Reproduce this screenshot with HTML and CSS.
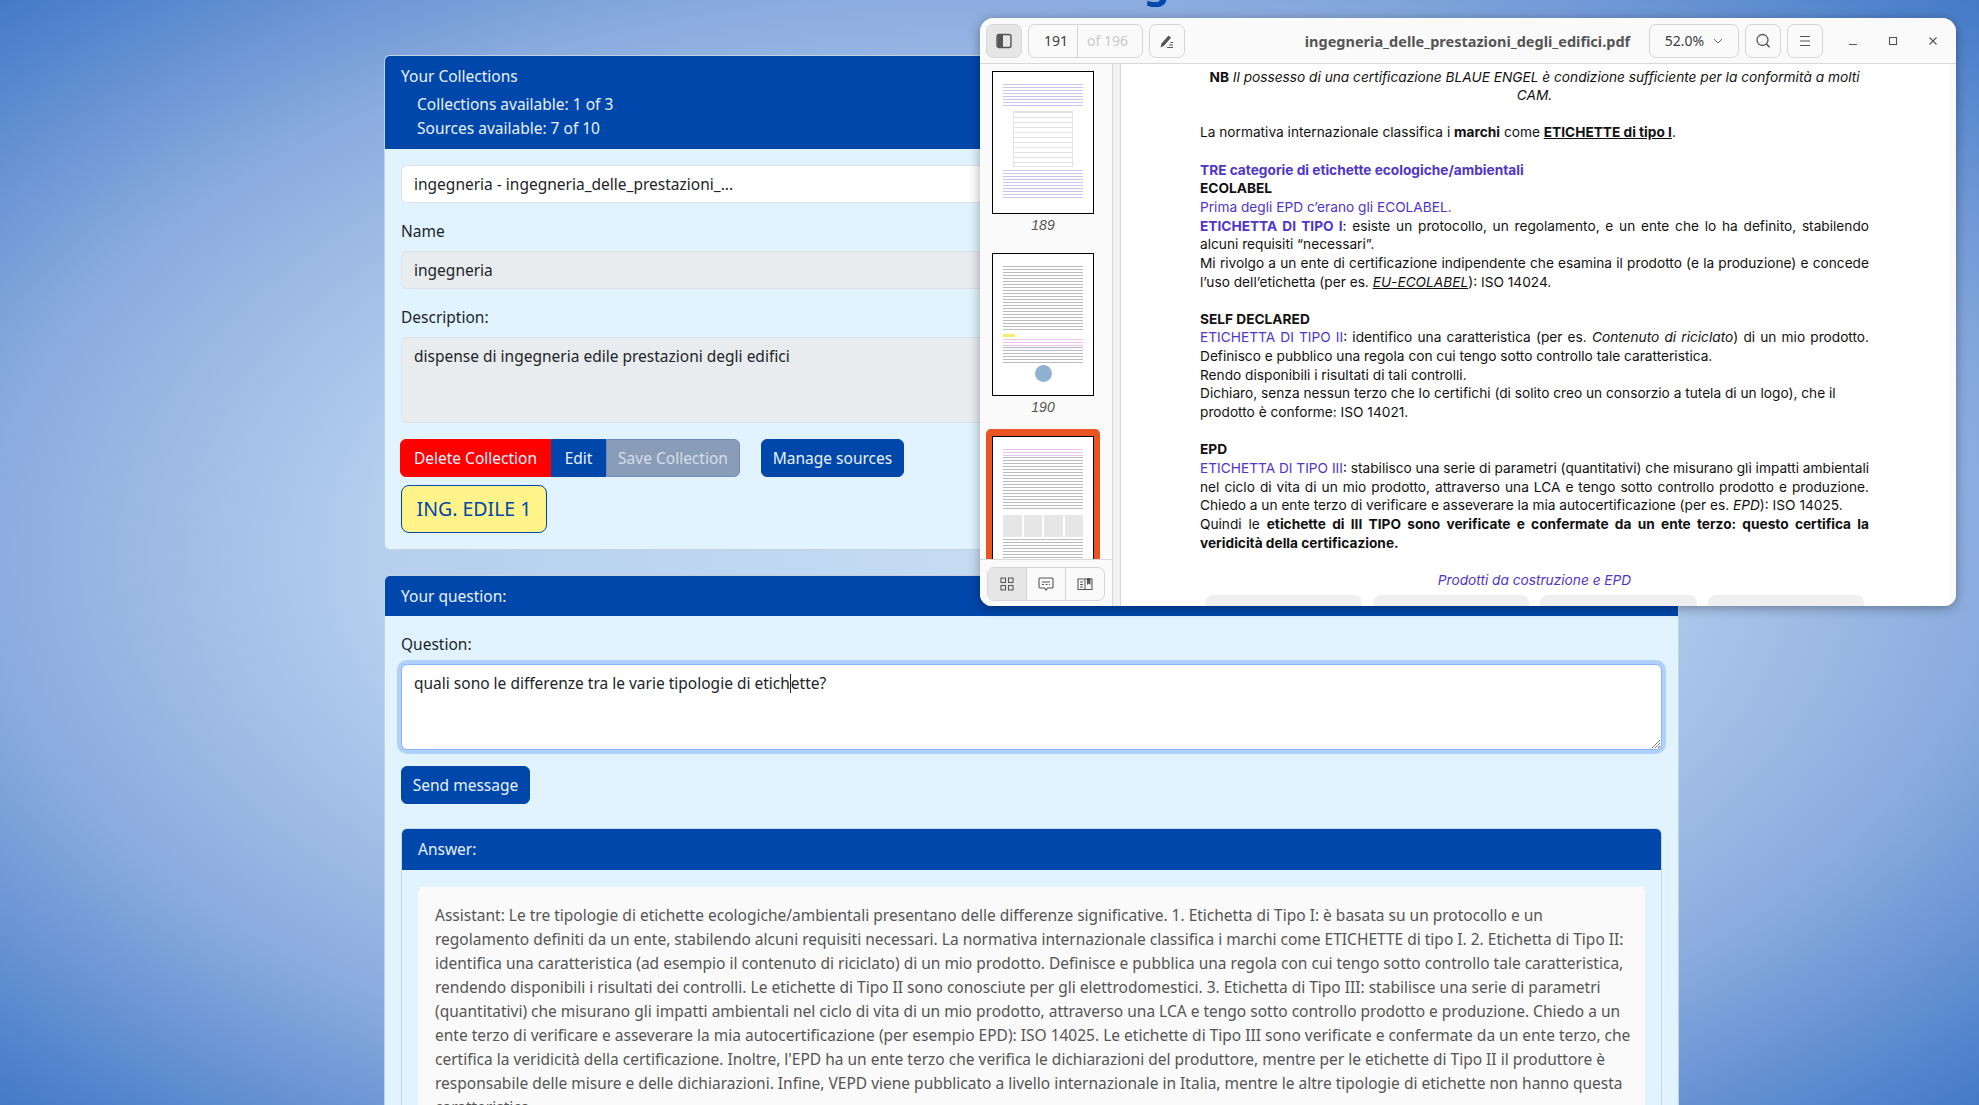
FILE: index.html
```html
<!DOCTYPE html>
<html lang="en">

<head>
    <meta charset="UTF-8">
    <title>Collections</title>
    <link rel="stylesheet" href="styles.css">
</head>

<body>
    <main class="page">
        <h1 class="page-title">Your Knowledge</h1>

        <section class="card">
            <div class="card-header collections-header">
                <div class="collections-title">Your Collections</div>
                <div class="quota">Collections available: 1 of 3</div>
                <div class="quota">Sources available: 7 of 10</div>
            </div>
            <div class="card-body">
                <div class="field select-field">ingegneria - ingegneria_delle_prestazioni_...</div>
                <div class="label">Name</div>
                <div class="field readonly">ingegneria</div>
                <div class="label">Description:</div>
                <div class="field readonly area">dispense di ingegneria edile prestazioni degli edifici</div>
                <div class="actions">
                    <div class="btn-group">
                        <button class="btn btn-danger">Delete Collection</button>
                        <button class="btn btn-square">Edit</button>
                        <button class="btn btn-disabled">Save Collection</button>
                    </div>
                    <button class="btn btn-manage">Manage sources</button>
                </div>
                <button class="btn-tag">ING. EDILE 1</button>
            </div>
        </section>

        <section class="card question-card">
            <div class="card-header">Your question:</div>
            <div class="card-body">
                <div class="label question-label">Question:</div>
                <div class="question-box">
                    <span>quali sono le differenze tra le varie tipologie di etich<i class="caret"></i>ette?</span>
                    <svg class="grip" width="10" height="10" viewBox="0 0 10 10">
                        <path d="M9 1L1 9M9 4L4 9M9 7L7 9" stroke="#777" stroke-width="1" fill="none"/>
                    </svg>
                </div>
                <button class="btn send-btn">Send message</button>

                <div class="answer">
                    <div class="card-header">Answer:</div>
                    <div class="answer-body">
                        <p class="answer-text">Assistant: Le tre tipologie di etichette ecologiche/ambientali presentano delle differenze significative. 1. Etichetta di Tipo I: è basata su un protocollo e un<br>
                        regolamento definiti da un ente, stabilendo alcuni requisiti necessari. La normativa internazionale classifica i marchi come ETICHETTE di tipo I. 2. Etichetta di Tipo II:<br>
                        identifica una caratteristica (ad esempio il contenuto di riciclato) di un mio prodotto. Definisce e pubblica una regola con cui tengo sotto controllo tale caratteristica,<br>
                        rendendo disponibili i risultati dei controlli. Le etichette di Tipo II sono conosciute per gli elettrodomestici. 3. Etichetta di Tipo III: stabilisce una serie di parametri<br>
                        (quantitativi) che misurano gli impatti ambientali nel ciclo di vita di un mio prodotto, attraverso una LCA e tengo sotto controllo prodotto e produzione. Chiedo a un<br>
                        ente terzo di verificare e asseverare la mia autocertificazione (per esempio EPD): ISO 14025. Le etichette di Tipo III sono verificate e confermate da un ente terzo, che<br>
                        certifica la veridicità della certificazione. Inoltre, l'EPD ha un ente terzo che verifica le dichiarazioni del produttore, mentre per le etichette di Tipo II il produttore è<br>
                        responsabile delle misure e delle dichiarazioni. Infine, VEPD viene pubblicato a livello internazionale in Italia, mentre le altre tipologie di etichette non hanno questa<br>
                        caratteristica.</p>
                    </div>
                </div>
            </div>
        </section>
    </main>

    <!-- pdf viewer window, floats over the browser page -->
    <div class="viewer">
        <header class="viewer-bar">
            <button class="tool active">
                <svg width="16" height="16" viewBox="0 0 16 16"><rect x="1" y="1.500" width="14" height="13" rx="2" fill="none" stroke="#555" stroke-width="1.400"/><path d="M1.500 3.500a1.500 1.500 0 0 1 1.500-1.500h4v12H3a1.500 1.500 0 0 1-1.500-1.500z" fill="#555"/></svg>
            </button>
            <div class="page-box">
                <span class="page-now">191</span>
                <span class="page-of">of 196</span>
            </div>
            <button class="tool">
                <svg width="16" height="16" viewBox="0 0 16 16"><path d="M1.500 14.500l1-4 7-8 2.500 2.200-7 8z" fill="#555"/><path d="M8 14.500h6M10 12h4M11.500 9.500h2.500" stroke="#555" stroke-width="1" fill="none"/></svg>
            </button>
            <div class="doc-name">ingegneria_delle_prestazioni_degli_edifici.pdf</div>
            <div class="zoom-box">
                <span>52.0%</span>
                <svg width="10" height="6" viewBox="0 0 10 6"><path d="M1 1l4 4 4-4" fill="none" stroke="#666" stroke-width="1"/></svg>
            </div>
            <button class="tool">
                <svg width="16" height="16" viewBox="0 0 16 16"><circle cx="7.500" cy="7" r="5.500" fill="none" stroke="#555" stroke-width="1.300"/><path d="M11.500 11l3 3.200" stroke="#555" stroke-width="1.500"/></svg>
            </button>
            <button class="tool">
                <svg width="14" height="12" viewBox="0 0 14 12"><path d="M2 1.500h10M2 6h10M2 10.500h10" stroke="#555" stroke-width="1.100"/></svg>
            </button>
            <div class="win-controls">
                <svg width="10" height="10" viewBox="0 0 10 10"><path d="M1 8.500h8" stroke="#555" stroke-width="1.200"/></svg>
                <svg width="10" height="10" viewBox="0 0 10 10"><rect x="1.500" y="1.500" width="7" height="7" fill="none" stroke="#555" stroke-width="1.100"/></svg>
                <svg width="10" height="10" viewBox="0 0 10 10"><path d="M1.500 1.500l7 7M8.500 1.500l-7 7" stroke="#555" stroke-width="1.100"/></svg>
            </div>
        </header>

        <div class="viewer-main">
            <aside class="sidebar">
                <div class="thumbs">
                    <div class="thumb-wrap">
                        <div class="thumb">
                            <div class="t-lines purple h24"></div>
                            <div class="t-table"></div>
                            <div class="t-lines purple h28"></div>
                        </div>
                        <div class="thumb-num">189</div>
                    </div>
                    <div class="thumb-wrap">
                        <div class="thumb">
                            <div class="t-lines dark h66"></div>
                            <div class="t-mark"></div>
                            <div class="t-lines pink h8"></div>
                            <div class="t-lines dark h16"></div>
                            <div class="t-logo"></div>
                        </div>
                        <div class="thumb-num">190</div>
                    </div>
                    <div class="thumb-wrap selected">
                        <div class="thumb">
                            <div class="t-lines pink h8"></div>
                            <div class="t-lines dark h52"></div>
                            <div class="t-cells"><i></i><i></i><i></i><i></i></div>
                            <div class="t-lines dark h24"></div>
                        </div>
                    </div>
                </div>
                <div class="side-foot">
                    <div class="side-tabs">
                        <div class="side-tab active">
                            <svg width="14" height="14" viewBox="0 0 14 14"><path d="M1 1h4.500v4.500H1zM8.500 1H13v4.500H8.500zM1 8.500h4.500V13H1zM8.500 8.500H13V13H8.500z" fill="none" stroke="#555" stroke-width="1.100"/></svg>
                        </div>
                        <div class="side-tab">
                            <svg width="16" height="15" viewBox="0 0 16 15"><path d="M2 1h12a1 1 0 0 1 1 1v8a1 1 0 0 1-1 1H9.500L8 13 6.500 11H2a1 1 0 0 1-1-1V2a1 1 0 0 1 1-1z" fill="none" stroke="#555" stroke-width="1.100"/><path d="M4 5h8M4 7.500h2M7.500 7.500h2M11 7.500h1" stroke="#555"/></svg>
                        </div>
                        <div class="side-tab">
                            <svg width="16" height="15" viewBox="0 0 16 15"><path d="M1 2h14v10.500H1z" fill="none" stroke="#555" stroke-width="1.100"/><path d="M8 2v10.500M3 5h3M3 7.500h3M3 10h3" stroke="#555"/><path d="M10 1h3.500v7l-1.750-1.500L10 8z" fill="#555"/></svg>
                        </div>
                    </div>
                </div>
            </aside>

            <div class="gutter"></div>

            <article class="pdf">
                <div class="pdf-line center"><b>NB</b> <em>Il possesso di una certificazione BLAUE ENGEL è condizione sufficiente per la conformità a molti</em></div>
                <div class="pdf-line center"><em>CAM.</em></div>
                <div class="pdf-line"></div>
                <div class="pdf-line">La normativa internazionale classifica i <b>marchi</b> come <b><u>ETICHETTE di tipo I</u></b>.</div>
                <div class="pdf-line"></div>
                <div class="pdf-line violet"><b>TRE categorie di etichette ecologiche/ambientali</b></div>
                <div class="pdf-line"><b>ECOLABEL</b></div>
                <div class="pdf-line violet">Prima degli EPD c’erano gli ECOLABEL.</div>
                <div class="pdf-line justify"><b class="violet">ETICHETTA DI TIPO I</b>: esiste un protocollo, un regolamento, e un ente che lo ha definito, stabilendo</div>
                <div class="pdf-line">alcuni requisiti “necessari”.</div>
                <div class="pdf-line justify">Mi rivolgo a un ente di certificazione indipendente che esamina il prodotto (e la produzione) e concede</div>
                <div class="pdf-line">l’uso dell’etichetta (per es. <em><u>EU-ECOLABEL</u></em>): ISO 14024.</div>
                <div class="pdf-line"></div>
                <div class="pdf-line"><b>SELF DECLARED</b></div>
                <div class="pdf-line justify"><span class="violet">ETICHETTA DI TIPO II</span>: identifico una caratteristica (per es. <em>Contenuto di riciclato</em>) di un mio prodotto.</div>
                <div class="pdf-line">Definisco e pubblico una regola con cui tengo sotto controllo tale caratteristica.</div>
                <div class="pdf-line">Rendo disponibili i risultati di tali controlli.</div>
                <div class="pdf-line">Dichiaro, senza nessun terzo che lo certifichi (di solito creo un consorzio a tutela di un logo), che il</div>
                <div class="pdf-line">prodotto è conforme: ISO 14021.</div>
                <div class="pdf-line"></div>
                <div class="pdf-line"><b>EPD</b></div>
                <div class="pdf-line justify"><span class="violet">ETICHETTA DI TIPO III</span>: stabilisco una serie di parametri (quantitativi) che misurano gli impatti ambientali</div>
                <div class="pdf-line justify">nel ciclo di vita di un mio prodotto, attraverso una LCA e tengo sotto controllo prodotto e produzione.</div>
                <div class="pdf-line">Chiedo a un ente terzo di verificare e asseverare la mia autocertificazione (per es. <em>EPD</em>): ISO 14025.</div>
                <div class="pdf-line justify">Quindi le <b>etichette di III TIPO sono verificate e confermate da un ente terzo: questo certifica la</b></div>
                <div class="pdf-line"><b>veridicità della certificazione.</b></div>
                <div class="pdf-line"></div>
                <div class="pdf-line center violet"><em>Prodotti da costruzione e EPD</em></div>
                <div class="pdf-cells"><i></i><i></i><i></i><i></i></div>
            </article>
        </div>
    </div>
</body>
</html>
```

FILE: styles.css
```css
* {
    box-sizing: border-box;
}

html, body {
    height: 100%;
}

body {
    margin: 0;
    overflow: hidden;
    font-family: "Noto Sans", sans-serif;
    font-size: 15.500px;
    line-height: 24px;
    color: #212529;
    background: radial-gradient(ellipse farthest-corner at 50% 50%, #c6dcf3 0%, #b5cfee 43%, #8aabde 72%, #437ac8 100%);
}

.page {
    width: 1295px;
    margin-left: 384px;
}

.page-title {
    margin: -50px 0 0;
    height: 105px;
    padding-top: 9px;
    text-align: center;
    font-size: 40px;
    line-height: 48px;
    color: #0047ab;
}

.card {
    background: #e0f3ff;
    border: 1px solid rgba(0, 0, 0, .125);
    border-radius: 6px;
}

.question-card {
    margin-top: 25px;
    border-bottom: 0;
}

.card-header {
    background: #0047ab;
    color: #e8f1ff;
    padding: 8px 16px;
    border-radius: 5px 5px 0 0;
    height: 40px;
}

.collections-header {
    height: 93px;
}

.collections-title {
    margin-bottom: 4px;
}

.quota {
    padding-left: 16px;
}

.card-body {
    padding: 16px;
}

.field {
    height: 38px;
    padding: 6px 12px;
    background: #fff;
    border: 1px solid #dee2e6;
    border-radius: 6px;
}

.readonly {
    background: #e9ecef;
}

.area {
    height: 86px;
}

.label {
    margin-top: 16px;
    margin-bottom: 8px;
}

.question-label {
    margin-top: 0;
}

.actions {
    display: flex;
    gap: 21px;
    margin-top: 16px;
    margin-left: -1px;
}

.btn-group {
    display: flex;
}

.btn {
    height: 38px;
    padding: 0;
    font: inherit;
    color: #e8f1ff;
    background: #0047ab;
    border: 1px solid #0047ab;
    border-radius: 6px;
}

.btn-danger {
    width: 151px;
    background: #f00;
    border-color: #f00;
    border-radius: 6px 0 0 6px;
}

.btn-square {
    width: 55px;
    border-radius: 0;
}

.btn-disabled {
    width: 134px;
    background: #8a9db8;
    border-color: #6d8cbc;
    color: #d5deea;
    border-radius: 0 6px 6px 0;
}

.btn-manage {
    width: 143px;
}

.btn-tag {
    display: block;
    width: 146px;
    height: 48px;
    margin-top: 8px;
    padding: 0;
    font: inherit;
    font-size: 19.500px;
    color: #0047ab;
    background: #fff38a;
    border: 1px solid #0047ab;
    border-radius: 8px;
}

.question-box {
    position: relative;
    height: 86px;
    padding: 6px 12px;
    background: #fff;
    border: 1px solid #86b7fe;
    border-radius: 6px;
    box-shadow: 0 0 0 4px #b0d0fd;
}

.caret {
    display: inline-block;
    width: 1px;
    height: 19px;
    margin-bottom: -4px;
    background: #212529;
}

.grip {
    position: absolute;
    right: 0;
    bottom: 0;
}

.send-btn {
    display: block;
    width: 129px;
    margin-top: 16px;
}

.answer {
    margin-top: 24px;
    border: 1px solid #c4d8e8;
    border-radius: 6px;
}

.answer .card-header {
    height: 41px;
}

.answer-body {
    padding: 17px 16px 16px;
}

.answer-text {
    margin: 0;
    padding: 16px 16px 16px 17px;
    white-space: nowrap;
    color: #555;
    background: #fafafa;
    border-radius: 5px;
    height: 260px;
}

/* pdf viewer */

.viewer {
    position: absolute;
    left: 980px;
    top: 18px;
    width: 976px;
    height: 588px;
    display: flex;
    flex-direction: column;
    overflow: hidden;
    background: #fafafa;
    border-radius: 14px 14px 12px 12px;
    box-shadow: 0 2px 12px rgba(0, 0, 0, .35);
    color: #3d3d3d;
}

.viewer-bar {
    height: 46px;
    flex: none;
    display: flex;
    align-items: center;
    gap: 6px;
    padding: 6px 0 5px 6px;
    background: #fafafa;
    border-bottom: 1px solid #d8d8d8;
    font-size: 14px;
}

.tool {
    width: 36px;
    height: 34px;
    padding: 0;
    display: flex;
    align-items: center;
    justify-content: center;
    background: #fafafa;
    border: 1px solid #d6d6d6;
    border-radius: 7px;
}

.tool.active {
    background: #e6e6e6;
}

.page-box {
    width: 115px;
    height: 34px;
    display: flex;
    align-items: center;
    border: 1px solid #d6d6d6;
    border-radius: 7px;
}

.page-now {
    width: 49px;
    padding-right: 9px;
    text-align: right;
    border-right: 1px solid #d6d6d6;
    line-height: 32px;
}

.page-of {
    padding-left: 9px;
    color: #c9c9c9;
}

.doc-name {
    width: 452px;
    padding-left: 101px;
    text-align: center;
    font-size: 14.500px;
    font-weight: 700;
    color: #555;
    white-space: nowrap;
}

.zoom-box {
    width: 90px;
    height: 34px;
    display: flex;
    align-items: center;
    justify-content: center;
    gap: 9px;
    border: 1px solid #d6d6d6;
    border-radius: 7px;
}

.win-controls {
    display: flex;
    align-items: center;
    gap: 30px;
    margin-left: 19px;
}

.viewer-main {
    flex: 1;
    display: flex;
    min-height: 0;
}

.sidebar {
    width: 133px;
    flex: none;
    display: flex;
    flex-direction: column;
    border-right: 1px solid #d8d8d8;
}

.thumbs {
    flex: 1;
    min-height: 0;
    overflow: hidden;
    padding-top: 7px;
}

.thumb-wrap {
    width: 114px;
    margin-left: 6px;
    padding: 0 6px;
}

.thumb-wrap.selected {
    padding: 7px 6px 0;
    margin-top: -6px;
    background: #e95420;
    border-radius: 5px 5px 0 0;
}

.thumb {
    height: 143px;
    padding: 12px 10px;
    background: #fff;
    border: 1px solid #000;
}

.thumb-num {
    height: 39px;
    text-align: center;
    font-family: "Liberation Sans", sans-serif;
    font-style: italic;
    font-size: 14px;
    line-height: 22px;
    color: #555;
}

.t-lines {
    background: repeating-linear-gradient(#b9bac4 0 1px, #fff 1px 3px);
}

.t-lines.purple {
    background: repeating-linear-gradient(#c9c3f1 0 1px, #fff 1px 3px);
}

.t-lines.pink {
    background: repeating-linear-gradient(#edc3ef 0 1px, #fff 1px 3px);
}

.h8 { height: 8px; }
.h16 { height: 16px; }
.h24 { height: 24px; }
.h28 { height: 28px; }
.h52 { height: 52px; }
.h66 { height: 66px; }

.t-table {
    height: 56px;
    margin: 3px 10px;
    background: repeating-linear-gradient(#e2e2e2 0 1px, #fff 1px 5px);
    border: 1px solid #e2e2e2;
}

.t-mark {
    width: 12px;
    height: 3px;
    margin: 2px 0;
    background: #f5f06a;
}

.t-logo {
    width: 17px;
    height: 17px;
    margin: 2px auto 0;
    border-radius: 50%;
    background: #8fb2d3;
}

.t-cells {
    display: flex;
    gap: 2px;
    margin: 6px 0 2px;
}

.t-cells i {
    flex: 1;
    height: 22px;
    background: #e6e6e6;
}

.side-foot {
    height: 47px;
    flex: none;
    padding: 7px 7px 6px;
    background: #fafafa;
    border-top: 1px solid #d8d8d8;
}

.side-tabs {
    display: flex;
    height: 34px;
    border: 1px solid #d6d6d6;
    border-radius: 7px;
    overflow: hidden;
}

.side-tab {
    flex: 1;
    display: flex;
    align-items: center;
    justify-content: center;
    border-left: 1px solid #d6d6d6;
}

.side-tab:first-child {
    border-left: 0;
}

.side-tab.active {
    background: #e6e6e6;
}

.gutter {
    width: 8px;
    flex: none;
    background: #f2f2f2;
    border-right: 1px solid #d8d8d8;
}

.pdf {
    flex: 1;
    min-width: 0;
    overflow: hidden;
    padding: 3.500px 80px 0 79px;
    background: #fff;
    border-right: 7px solid #fafafa;
    font-family: "Inter", sans-serif;
    font-size: 13.700px;
    line-height: 18.650px;
    color: #111;
}

.pdf-line {
    height: 18.650px;
    white-space: nowrap;
}

.pdf-line.center {
    text-align: center;
}

.pdf-line.justify {
    text-align: justify;
    text-align-last: justify;
}

.violet {
    color: #4f35c9;
}

.pdf-cells {
    display: flex;
    gap: 11px;
    margin: 6px 5px 0;
}

.pdf-cells i {
    flex: 1;
    height: 40px;
    background: #efefef;
    border-radius: 8px 8px 0 0;
}
```
